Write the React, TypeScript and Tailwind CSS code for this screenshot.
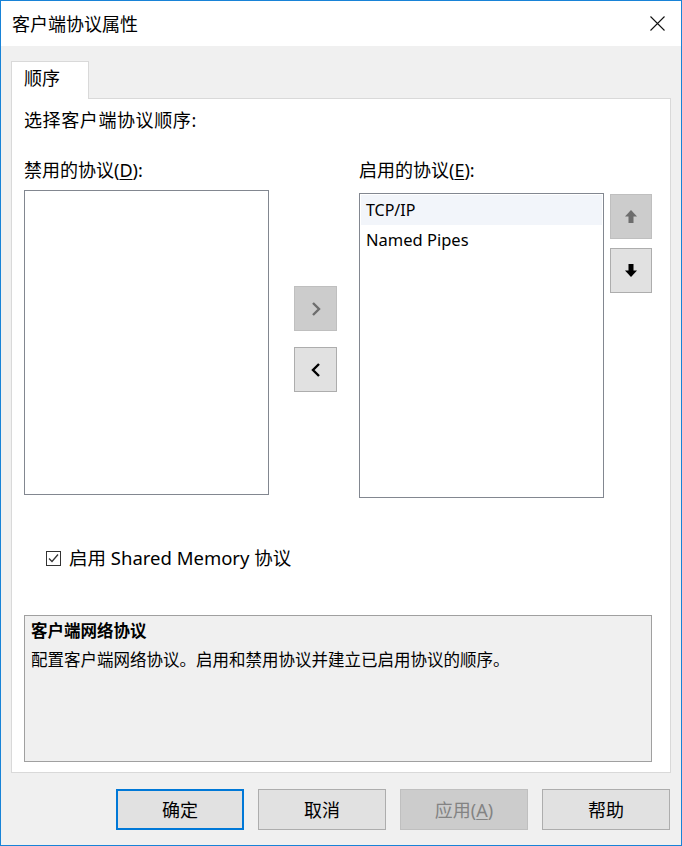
import React from "react";

const font = {
  fontFamily: '"Noto Sans", "Noto Sans CJK SC", sans-serif',
};

function ArrowIcon({ dir, color }: { dir: "up" | "down"; color: string }) {
  return (
    <svg width="12" height="13" viewBox="0 0 12 13">
      <g transform={dir === "down" ? "rotate(180 6 6.5)" : undefined} fill={color}>
        <polygon points="6,0 12,6.5 0,6.5" />
        <rect x="3.5" y="6" width="5" height="7" />
      </g>
    </svg>
  );
}

function Chevron({ dir, color }: { dir: "left" | "right"; color: string }) {
  return (
    <svg width="10" height="16" viewBox="0 0 10 16">
      <polyline
        points={dir === "right" ? "2,2 8,8 2,14" : "8,2 2,8 8,14"}
        fill="none"
        stroke={color}
        strokeWidth="2.4"
      />
    </svg>
  );
}

function SideButton({
  disabled,
  children,
}: {
  disabled?: boolean;
  children: React.ReactNode;
}) {
  return (
    <div
      className={
        "flex h-[45px] items-center justify-center border " +
        (disabled
          ? "border-[#bfbfbf] bg-[#cccccc]"
          : "border-[#adadad] bg-[#e1e1e1]")
      }
    >
      {children}
    </div>
  );
}

function DialogButton({
  label,
  accel,
  primary,
  disabled,
}: {
  label: string;
  accel?: string;
  primary?: boolean;
  disabled?: boolean;
}) {
  const cls = primary
    ? "border-2 border-[#0078d7] bg-[#e1e1e1] text-black"
    : disabled
    ? "border border-[#bfbfbf] bg-[#cccccc] text-[#838383]"
    : "border border-[#adadad] bg-[#e1e1e1] text-black";
  return (
    <div
      className={
        "flex h-[41px] w-[128px] items-center justify-center text-[18px] leading-[22px] " +
        cls
      }
    >
      {label}
      {accel && (
        <>
          (<span className="underline underline-offset-2">{accel}</span>)
        </>
      )}
    </div>
  );
}

export default function App() {
  return (
    <div
      className="flex h-[846px] w-[682px] flex-col border border-[#1883d7] bg-[#f0f0f0] text-black"
      style={font}
    >
      {/* title bar */}
      <div className="flex h-[45px] items-center justify-between bg-white pl-[11px] pr-[16px]">
        <span className="text-[18px] leading-[22px]">客户端协议属性</span>
        <svg width="15" height="15" viewBox="0 0 15 15">
          <path d="M0.5 0.5 L14.5 14.5 M14.5 0.5 L0.5 14.5" stroke="#111" strokeWidth="1.1" />
        </svg>
      </div>

      <div className="flex flex-col px-[10px] pt-[15px]">
        {/* tab */}
        <div className="relative z-10 -mb-px flex h-[38px] w-[78px] items-start border border-b-0 border-[#d9d9d9] bg-white pl-[12px] pt-[5px] text-[18px] leading-[22px]">
          顺序
        </div>

        {/* panel */}
        <div className="flex h-[675px] flex-col border border-[#d9d9d9] bg-white px-[12px] pt-[10px]">
          <div className="text-[18px] leading-[22px] tracking-[0.6px]">选择客户端协议顺序:</div>

          <div className="mt-[28px] flex">
            {/* disabled list */}
            <div className="flex w-[245px] flex-col">
              <div className="text-[18px] leading-[22px]">
                禁用的协议(<span className="underline underline-offset-2">D</span>):
              </div>
              <div className="mt-[9px] h-[305px] border border-[#828790] bg-white" />
            </div>

            {/* move buttons */}
            <div className="ml-[25px] flex w-[43px] flex-col gap-[16px] pt-[127px]">
              <SideButton disabled>
                <Chevron dir="right" color="#6d6d6d" />
              </SideButton>
              <SideButton>
                <Chevron dir="left" color="#000" />
              </SideButton>
            </div>

            {/* enabled list */}
            <div className="ml-[22px] flex w-[245px] flex-col">
              <div className="text-[18px] leading-[22px]">
                启用的协议(<span className="underline underline-offset-2">E</span>):
              </div>
              <div className="mt-[12px] flex h-[305px] flex-col border border-[#828790] bg-white p-px">
                <div className="flex h-[30px] items-center bg-[#f2f5fa] pl-[5px] text-[16px]">
                  TCP/IP
                </div>
                <div className="flex h-[30px] items-center pl-[5px] text-[16.5px]">
                  Named Pipes
                </div>
              </div>
            </div>

            {/* order buttons */}
            <div className="ml-[6px] flex w-[42px] flex-col gap-[9px] pt-[35px]">
              <SideButton disabled>
                <ArrowIcon dir="up" color="#6d6d6d" />
              </SideButton>
              <SideButton>
                <ArrowIcon dir="down" color="#000" />
              </SideButton>
            </div>
          </div>

          {/* checkbox */}
          <div className="ml-[22px] mt-[49px] flex items-center gap-[8px]">
            <svg width="15" height="15" viewBox="0 0 15 15">
              <rect x="0.5" y="0.5" width="14" height="14" fill="#fff" stroke="#333" />
              <polyline points="3,7.5 6,10.5 12,3.5" fill="none" stroke="#333" strokeWidth="1.3" />
            </svg>
            <span className="text-[18.5px] leading-[22px]">启用 Shared Memory 协议</span>
          </div>

          {/* description */}
          <div className="mt-[46px] flex h-[147px] w-[628px] flex-col border border-[#a0a0a0] bg-[#f0f0f0] px-[6px] pt-[4px]">
            <div className="text-[16.5px] font-bold leading-[22px]">客户端网络协议</div>
            <div className="mt-[7px] text-[16.5px] leading-[22px]">
              配置客户端网络协议。启用和禁用协议并建立已启用协议的顺序。
            </div>
          </div>
        </div>

        {/* bottom buttons */}
        <div className="mt-[16px] flex justify-end gap-[14px] pr-px">
          <DialogButton label="确定" primary />
          <DialogButton label="取消" />
          <DialogButton label="应用" accel="A" disabled />
          <DialogButton label="帮助" />
        </div>
      </div>
    </div>
  );
}
